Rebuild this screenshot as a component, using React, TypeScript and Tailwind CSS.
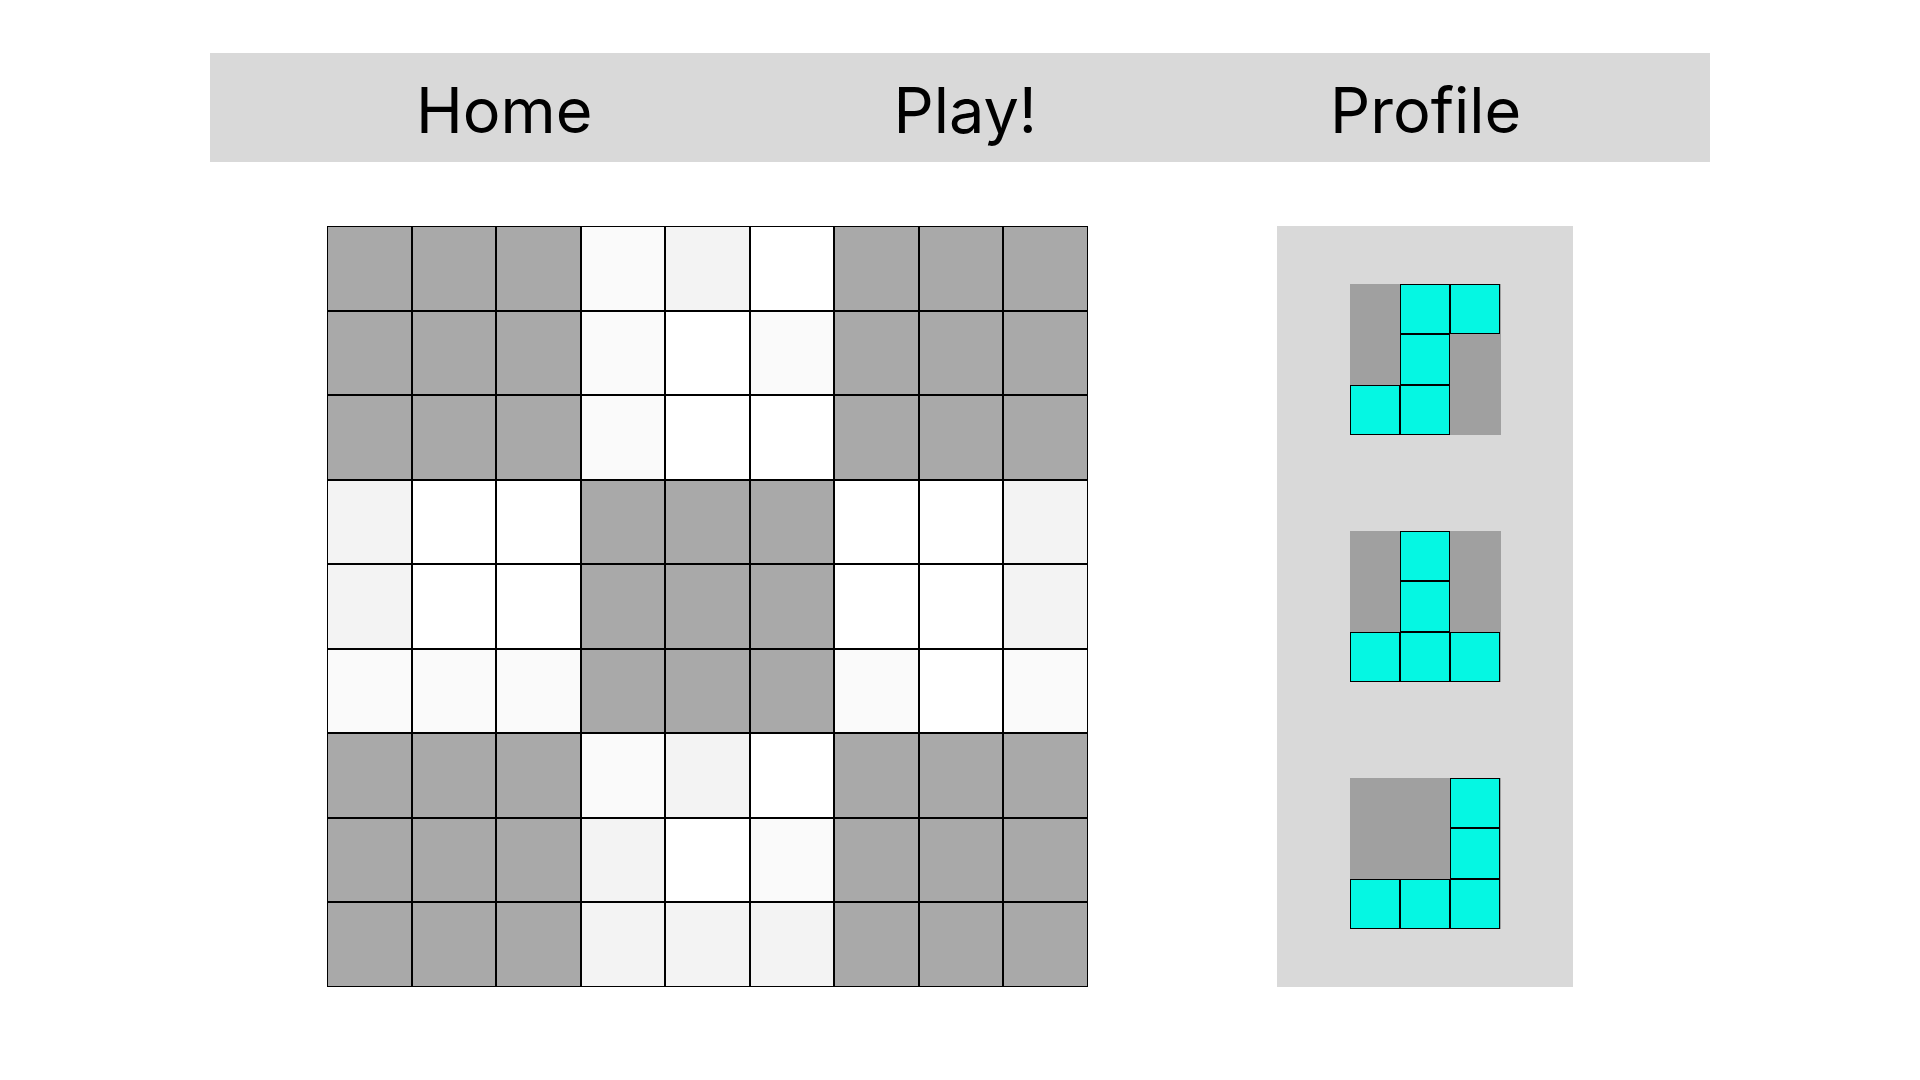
import React from 'react';

const G = '#a9a9a9';
const W = '#ffffff';
const A = '#fafafa';
const B = '#f3f3f3';

const board: string[][] = [
  [G, G, G, A, B, W, G, G, G],
  [G, G, G, A, W, A, G, G, G],
  [G, G, G, A, W, W, G, G, G],
  [B, W, W, G, G, G, W, W, B],
  [B, W, W, G, G, G, W, W, B],
  [A, A, A, G, G, G, A, W, A],
  [G, G, G, A, B, W, G, G, G],
  [G, G, G, B, W, A, G, G, G],
  [G, G, G, B, B, B, G, G, G],
];

const pieces: number[][][] = [
  [
    [0, 1, 1],
    [0, 1, 0],
    [1, 1, 0],
  ],
  [
    [0, 1, 0],
    [0, 1, 0],
    [1, 1, 1],
  ],
  [
    [0, 0, 1],
    [0, 0, 1],
    [1, 1, 1],
  ],
];

const Piece: React.FC<{ shape: number[][] }> = ({ shape }) => (
  <div className="grid grid-cols-3 w-[151px] h-[151px] bg-[#a0a0a0]">
    {shape.flat().map((v, i) => (
      <div
        key={i}
        className={v ? 'bg-[#05f7e3] border-[1.5px] border-black' : ''}
      />
    ))}
  </div>
);

export default function App() {
  return (
    <div className="min-h-screen bg-white" style={{ fontFamily: 'Inter, "Liberation Sans", sans-serif' }}>
      <div className="w-[1500px] mx-auto pt-[53px]">
        <nav className="h-[109px] bg-[#d9d9d9] flex items-center pt-[5px] pl-[206px] text-[63px] text-black">
          <span>Home</span>
          <span className="ml-[301px]">Play!</span>
          <span className="ml-[293px]">Profile</span>
        </nav>

        <div className="flex mt-[64px] pl-[117px] gap-[189px]">
          <div className="grid grid-cols-9 w-[761px] h-[761px]">
            {board.flat().map((c, i) => (
              <div key={i} className="border border-black" style={{ backgroundColor: c }} />
            ))}
          </div>

          <div className="w-[296px] h-[761px] bg-[#d9d9d9] flex flex-col items-center pt-[58px] gap-[96px]">
            {pieces.map((p, i) => (
              <Piece key={i} shape={p} />
            ))}
          </div>
        </div>
      </div>
    </div>
  );
}
